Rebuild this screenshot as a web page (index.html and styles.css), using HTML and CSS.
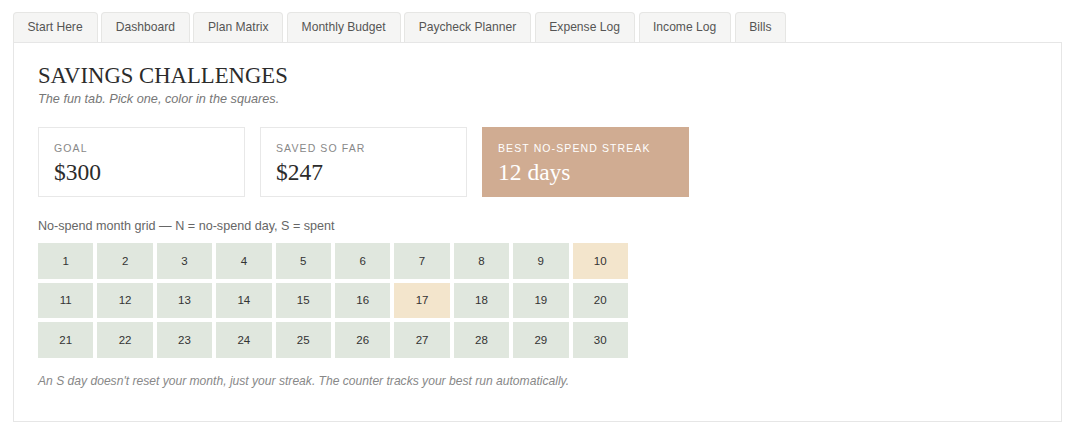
FILE: index.html
```html
<!DOCTYPE html>
<html>

<head>
    <title>Savings Challenges</title>
    <meta name="viewport" content="width=device-width, initial-scale=1">
    <link rel="stylesheet" href="styles.css">
</head>

<body>
    <div class="tabs">
        <div class="tab">Start Here</div>
        <div class="tab">Dashboard</div>
        <div class="tab">Plan Matrix</div>
        <div class="tab">Monthly Budget</div>
        <div class="tab">Paycheck Planner</div>
        <div class="tab">Expense Log</div>
        <div class="tab">Income Log</div>
        <div class="tab">Bills</div>
    </div>

    <div class="panel">
        <h1>SAVINGS CHALLENGES</h1>
        <p class="subtitle">The fun tab. Pick one, color in the squares.</p>

        <div class="stats">
            <div class="stat">
                <div class="stat-label">Goal</div>
                <div class="stat-value">$300</div>
            </div>
            <div class="stat">
                <div class="stat-label">Saved so far</div>
                <div class="stat-value">$247</div>
            </div>
            <div class="stat stat-accent">
                <div class="stat-label">Best no-spend streak</div>
                <div class="stat-value">12 days</div>
            </div>
        </div>

        <p class="caption">No-spend month grid &mdash; N = no-spend day, S = spent</p>

        <div class="grid">
            <div class="day">1</div>
            <div class="day">2</div>
            <div class="day">3</div>
            <div class="day">4</div>
            <div class="day">5</div>
            <div class="day">6</div>
            <div class="day">7</div>
            <div class="day">8</div>
            <div class="day">9</div>
            <div class="day spent">10</div>
            <div class="day">11</div>
            <div class="day">12</div>
            <div class="day">13</div>
            <div class="day">14</div>
            <div class="day">15</div>
            <div class="day">16</div>
            <div class="day spent">17</div>
            <div class="day">18</div>
            <div class="day">19</div>
            <div class="day">20</div>
            <div class="day">21</div>
            <div class="day">22</div>
            <div class="day">23</div>
            <div class="day">24</div>
            <div class="day">25</div>
            <div class="day">26</div>
            <div class="day">27</div>
            <div class="day">28</div>
            <div class="day">29</div>
            <div class="day">30</div>
        </div>

        <p class="note">An S day doesn't reset your month, just your streak. The counter tracks your best run automatically.</p>
    </div>
</body>

</html>
```

FILE: styles.css
```css
* {
    box-sizing: border-box;
    margin: 0;
    padding: 0;
}

body {
    font-family: "Liberation Sans", Arial, sans-serif;
    background: #fff;
    color: #333;
    padding: 12px 12px 12px 13px;
}

.tabs {
    display: flex;
    gap: 3.6px;
    height: 30px;
}

.tab {
    background: #f5f5f4;
    border: 1px solid #e6e6e4;
    border-bottom: none;
    border-radius: 4px 4px 0 0;
    padding: 0 14px 0 13.5px;
    font-size: 12.1px;
    line-height: 29px;
    color: #555;
}

.panel {
    border: 1px solid #e6e6e6;
    padding: 20px 24px 34px;
    height: 380px;
}

h1 {
    font-family: "Liberation Serif", Georgia, serif;
    font-weight: 400;
    font-size: 22.7px;
    line-height: 26px;
    color: #2b2b2b;
}

.subtitle {
    font-size: 12.7px;
    font-style: italic;
    color: #777;
    margin-top: 3px;
}

.stats {
    display: flex;
    gap: 15px;
    margin-top: 21px;
}

.stat {
    width: 207px;
    height: 70px;
    border: 1px solid #e8e8e8;
    padding: 14px 15px;
}

.stat-label {
    font-size: 10.5px;
    letter-spacing: 1.1px;
    text-transform: uppercase;
    color: #888;
}

.stat-value {
    font-family: "Liberation Serif", Georgia, serif;
    font-size: 23.5px;
    color: #2b2b2b;
    margin-top: 5px;
}

.stat-accent {
    background: #d0ac92;
    border-color: #d0ac92;
}

.stat-accent .stat-label,
.stat-accent .stat-value {
    color: #fff;
}

.caption {
    font-size: 12.6px;
    color: #666;
    margin-top: 22px;
}

.grid {
    display: grid;
    grid-template-columns: repeat(10, 55.4px);
    grid-auto-rows: 35.5px;
    gap: 4px;
    margin-top: 10px;
}

.day {
    background: #e0e7de;
    display: flex;
    align-items: center;
    justify-content: center;
    font-size: 11.5px;
    color: #333;
}

.day.spent {
    background: #f3e5cc;
}

.note {
    font-size: 12.1px;
    font-style: italic;
    color: #888;
    margin-top: 16px;
}
```
